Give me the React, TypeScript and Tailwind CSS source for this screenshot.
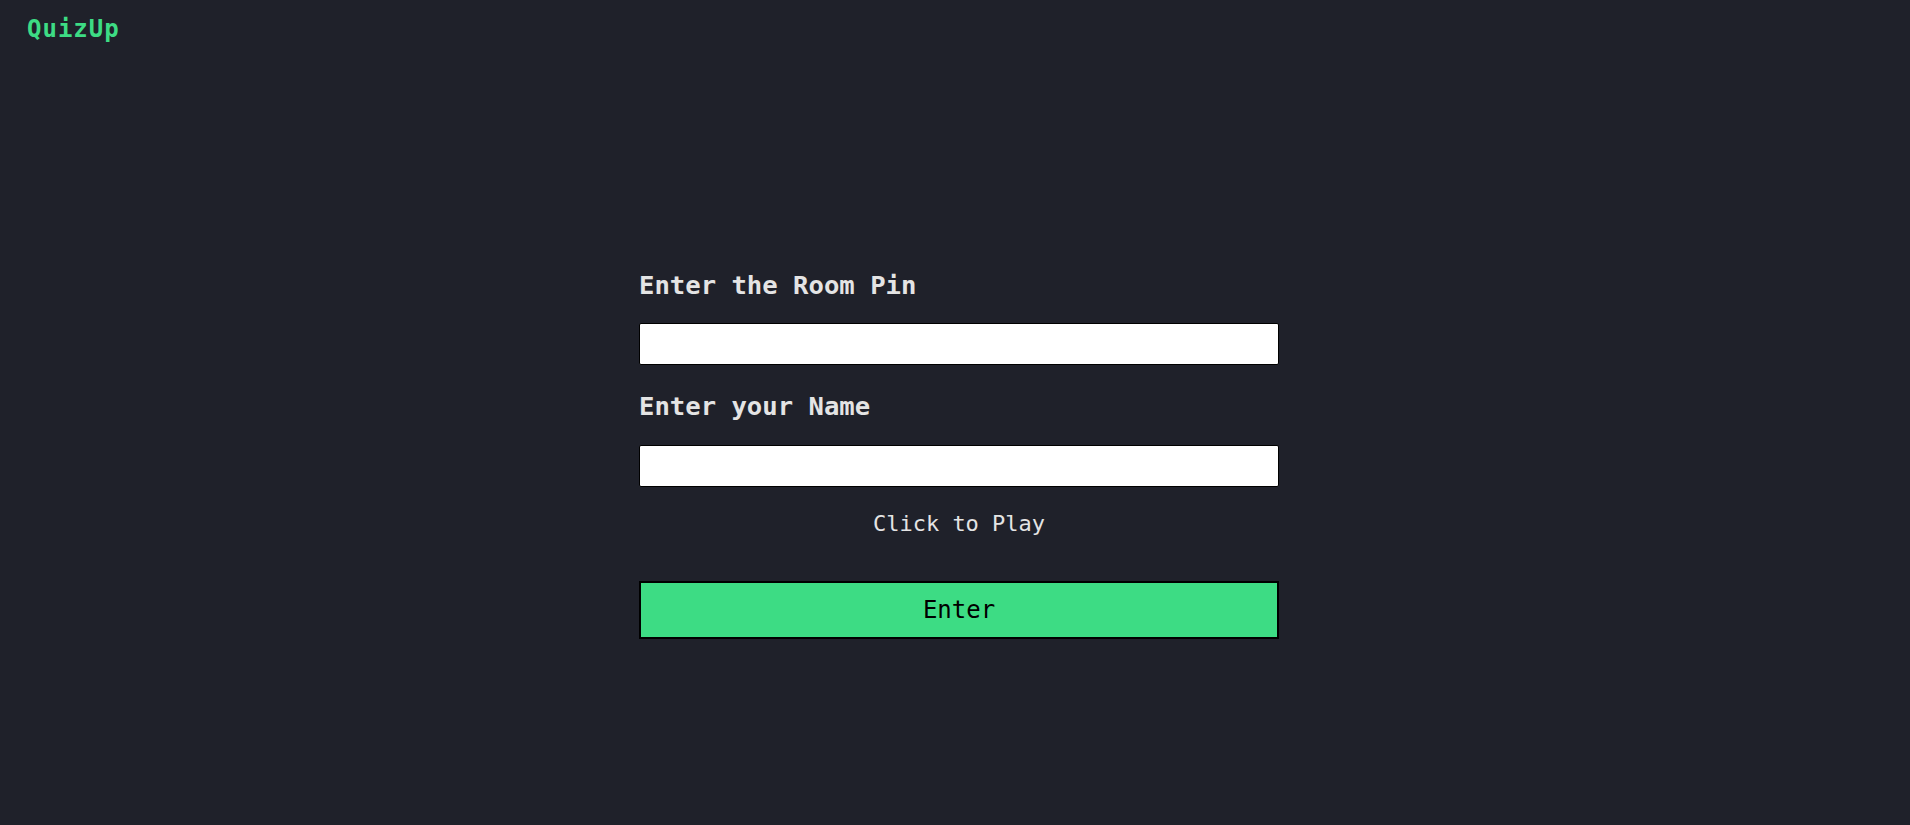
import React, { useState } from "react";

const mono = "font-['DejaVu_Sans_Mono',monospace]";

const App = () => {
  const [pin, setPin] = useState("");
  const [name, setName] = useState("");

  return (
    <div className={`min-h-screen w-full bg-[#1f212a] ${mono}`}>
      <header className="px-[27px] pt-[13px]">
        <span className="text-[24px] leading-[32px] font-bold tracking-[1px] text-[#3ddc84]">
          QuizUp
        </span>
      </header>

      <div className="flex justify-center pl-[8px]">
        <div className="mt-[224px] flex w-[640px] flex-col">
          <label className="text-[25.6px] leading-[32px] font-bold text-[#e4e4e4]">
            Enter the Room Pin
          </label>
          <input
            type="text"
            value={pin}
            onChange={(e) => setPin(e.target.value)}
            className="mt-[22px] h-[42px] w-full rounded-[2px] border border-black bg-white px-2 text-[18px] text-black outline-none"
          />

          <label className="mt-[25px] text-[25.6px] leading-[32px] font-bold text-[#e4e4e4]">
            Enter your Name
          </label>
          <input
            type="text"
            value={name}
            onChange={(e) => setName(e.target.value)}
            className="mt-[23px] h-[42px] w-full rounded-[2px] border border-black bg-white px-2 text-[18px] text-black outline-none"
          />

          <p className="mt-[23px] text-center text-[22px] leading-[28px] text-[#e4e4e4]">
            Click to Play
          </p>

          <button
            type="button"
            className="mt-[43px] h-[58px] w-full border-2 border-black bg-[#3ddc84] text-[24px] text-black"
          >
            Enter
          </button>
        </div>
      </div>
    </div>
  );
};

export default App;
